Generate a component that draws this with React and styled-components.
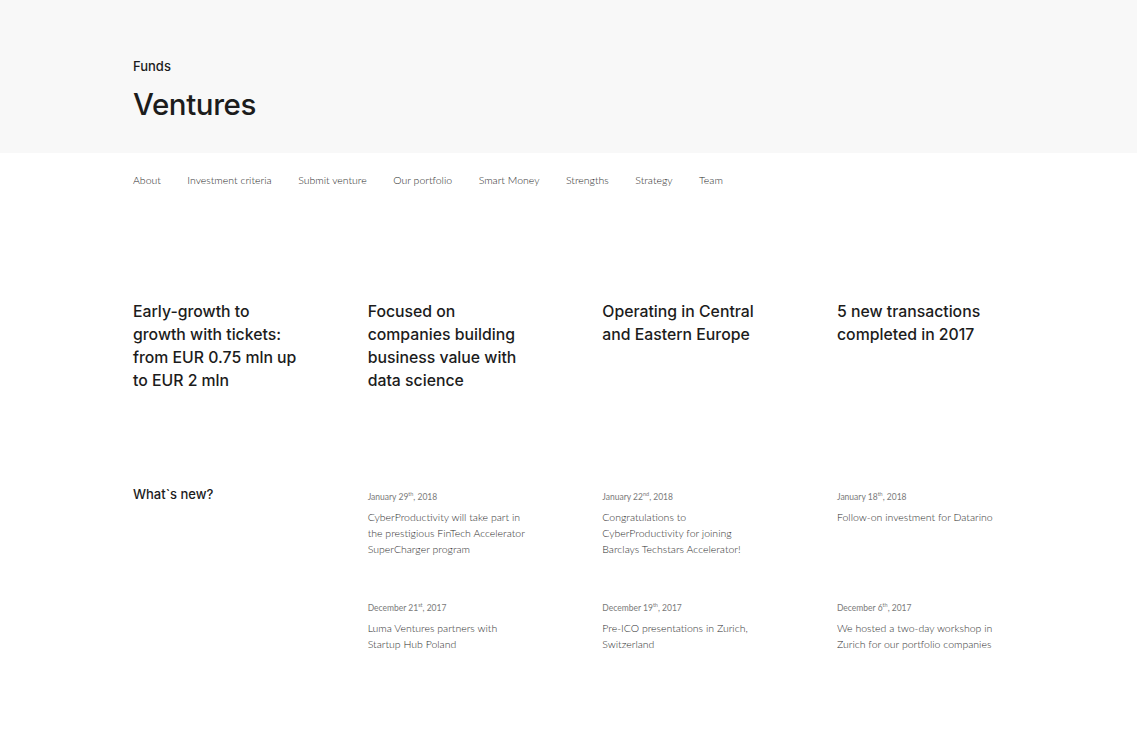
import React from "react";
import styled, { createGlobalStyle } from "styled-components";

const Global = createGlobalStyle`
  html, body { margin: 0; padding: 0; background: #fff; }
  body { font-family: "Inter", "Liberation Sans", sans-serif; -webkit-font-smoothing: antialiased; }
  * { box-sizing: border-box; }
`;

const Header = styled.header`
  background: #f8f8f8;
  height: 153px;
  padding: 58px 0 0 133px;
`;

const Kicker = styled.div`
  font-size: 13px;
  line-height: 16px;
  font-weight: 500;
  color: #1c1c1c;
`;

const Title = styled.h1`
  margin: 10px 0 0;
  font-size: 29.5px;
  line-height: 40px;
  font-weight: 500;
  letter-spacing: -0.4px;
  color: #1c1c1c;
`;

const Nav = styled.nav`
  display: flex;
  gap: 26.5px;
  padding: 19px 0 0 133px;
`;

const NavLink = styled.a`
  font-family: "Lato", sans-serif;
  font-size: 10.5px;
  line-height: 16px;
  font-weight: 300;
  color: #2a2a2a;
  text-decoration: none;
`;

const Main = styled.main`
  padding-left: 133px;
`;

const Grid = styled.div`
  display: grid;
  grid-template-columns: repeat(4, 234.67px);
`;

const Facts = styled(Grid)`
  margin-top: 112px;
`;

const Fact = styled.p`
  margin: 0;
  width: 165px;
  font-size: 15.8px;
  line-height: 23px;
  font-weight: 500;
  color: #1c1c1c;
`;

const News = styled(Grid)`
  margin-top: 92px;
  row-gap: 38px;
`;

const NewsHeading = styled.h2`
  grid-row: 1 / span 2;
  margin: 0;
  font-size: 13px;
  line-height: 20px;
  font-weight: 500;
  color: #1c1c1c;
`;

const Item = styled.div`
  padding-top: 6px;
  width: 160px;
`;

const DateLine = styled.div`
  font-family: "Lato", sans-serif;
  font-size: 8.5px;
  line-height: 14px;
  font-weight: 400;
  color: #7a7a7a;
  sup { font-size: 5.5px; line-height: 0; vertical-align: 4px; }
`;

const Text = styled.p`
  margin: 5px 0 0;
  font-family: "Lato", sans-serif;
  font-size: 10.5px;
  line-height: 16px;
  font-weight: 300;
  color: #2e2e2e;
`;

const nav = ["About", "Investment criteria", "Submit venture", "Our portfolio", "Smart Money", "Strengths", "Strategy", "Team"];

const facts = [
  "Early-growth to growth with tickets: from EUR 0.75 mln up to EUR 2 mln",
  "Focused on companies building business value with data science",
  "Operating in Central and Eastern Europe",
  "5 new transactions completed in 2017",
];

const news = [
  ["January 29", "th", "2018", "CyberProductivity will take part in the prestigious FinTech Accelerator SuperCharger program"],
  ["January 22", "nd", "2018", "Congratulations to CyberProductivity for joining Barclays Techstars Accelerator!"],
  ["January 18", "th", "2018", "Follow-on investment for Datarino"],
  ["December 21", "st", "2017", "Luma Ventures partners with Startup Hub Poland"],
  ["December 19", "th", "2017", "Pre-ICO presentations in Zurich, Switzerland"],
  ["December 6", "th", "2017", "We hosted a two-day workshop in Zurich for our portfolio companies"],
];

export default function App() {
  return (
    <>
      <Global />
      <Header>
        <Kicker>Funds</Kicker>
        <Title>Ventures</Title>
      </Header>
      <Nav>
        {nav.map((n) => (
          <NavLink key={n} href="#">{n}</NavLink>
        ))}
      </Nav>
      <Main>
        <Facts>
          {facts.map((f) => (
            <Fact key={f}>{f}</Fact>
          ))}
        </Facts>
        <News>
          <NewsHeading>What`s new?</NewsHeading>
          {news.map(([d, s, y, t]) => (
            <Item key={t}>
              <DateLine>
                {d}
                <sup>{s}</sup>, {y}
              </DateLine>
              <Text>{t}</Text>
            </Item>
          ))}
        </News>
      </Main>
    </>
  );
}
